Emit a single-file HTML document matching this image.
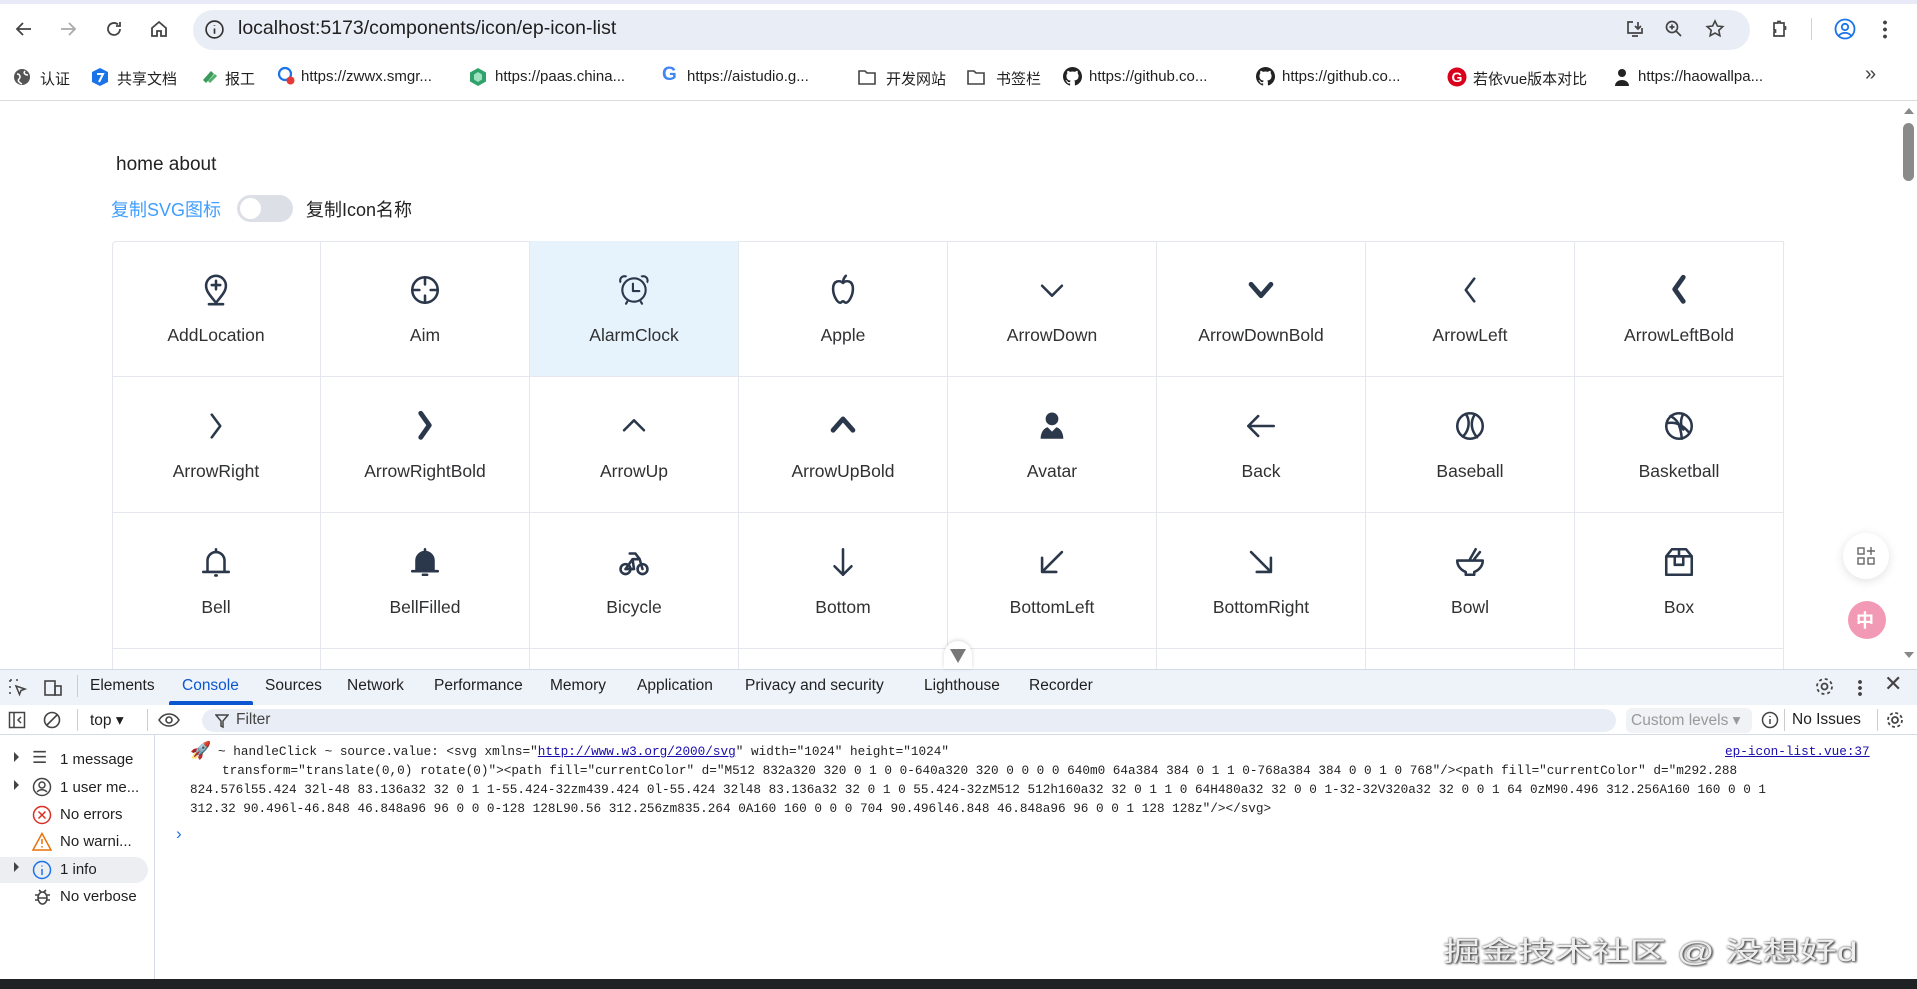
<!DOCTYPE html>
<html><head><meta charset="utf-8"><style>
*{box-sizing:border-box;margin:0;padding:0}
body{width:1917px;height:989px;overflow:hidden;background:#fff;font-family:"Liberation Sans","Noto Sans CJK SC",sans-serif;position:relative;color:#1f1f1f}
.a{position:absolute;white-space:nowrap}
.ic{position:absolute}
.bm{position:absolute;top:68px;font-size:15px;color:#1f1f1f}
.cell{position:absolute;width:209px;height:136px;border-right:1px solid #e4e7ed;border-bottom:1px solid #e4e7ed;text-align:center}
.cell svg{position:absolute;left:87px;top:32px;width:34px;height:34px;fill:none;stroke:#2b374a;stroke-width:1.8;stroke-linecap:round;stroke-linejoin:round}
.cell span{position:absolute;left:0;right:0;top:84px;font-size:17.5px;color:#303133}
.tab{position:absolute;top:677px;font-size:15.5px;color:#1f1f1f}
.sb{position:absolute;left:60px;font-size:15px;color:#1f1f1f}
.mono{position:absolute;font-family:"Liberation Mono","Noto Sans CJK SC",monospace;font-size:12.7px;color:#1f1f1f;white-space:pre}
</style></head><body>
<div class="a" style="left:0;top:0;width:1917px;height:101px;background:#fff;border-bottom:1px solid #dadce0"></div>
<div class="a" style="left:0;top:0;width:1917px;height:4px;background:#e8eaf7"></div>
<svg class="ic" style="left:14px;top:19px" width="20" height="20" viewBox="0 0 20 20" fill="none" stroke="#444" stroke-width="1.8"><path d="M17 10H3M9 4l-6 6 6 6"/></svg>
<svg class="ic" style="left:58px;top:19px" width="20" height="20" viewBox="0 0 20 20" fill="none" stroke="#aaa" stroke-width="1.8"><path d="M3 10h14M11 4l6 6-6 6"/></svg>
<svg class="ic" style="left:104px;top:19px" width="20" height="20" viewBox="0 0 20 20" fill="none" stroke="#444" stroke-width="1.8"><path d="M16 10a6 6 0 1 1-2-4.5M16 3v4h-4"/></svg>
<svg class="ic" style="left:149px;top:19px" width="20" height="20" viewBox="0 0 20 20" fill="none" stroke="#444" stroke-width="1.8"><path d="M3 9l7-6 7 6v8h-5v-5H8v5H3z"/></svg>
<div class="a" style="left:193px;top:10px;width:1557px;height:40px;border-radius:20px;background:#e9eef6"></div>
<svg class="ic" style="left:204px;top:19px" width="21" height="21" viewBox="0 0 20 20" fill="none" stroke="#333" stroke-width="1.6"><circle cx="10" cy="10" r="8"/><path d="M10 9v5M10 6v.5"/></svg>
<div class="a" style="left:238px;top:17px;font-size:19.5px;color:#1f1f1f">localhost:5173/components/icon/ep-icon-list</div>
<svg class="ic" style="left:1625px;top:19px" width="20" height="20" viewBox="0 0 20 20" fill="none" stroke="#444" stroke-width="1.7"><path d="M8 3H3v11h14V9M7 17h6M13 3v7M10 7l3 3 3-3"/></svg>
<svg class="ic" style="left:1664px;top:19px" width="20" height="20" viewBox="0 0 20 20" fill="none" stroke="#444" stroke-width="1.7"><circle cx="8" cy="8" r="5.5"/><path d="M12 12l5 5M8 5.5v5M5.5 8h5"/></svg>
<svg class="ic" style="left:1705px;top:19px" width="20" height="20" viewBox="0 0 20 20" fill="none" stroke="#444" stroke-width="1.6"><path d="M10 2l2.4 5 5.4.6-4 3.7 1.1 5.4L10 14l-4.9 2.7 1.1-5.4-4-3.7 5.4-.6z"/></svg>
<svg class="ic" style="left:1769px;top:19px" width="20" height="20" viewBox="0 0 20 20" fill="none" stroke="#444" stroke-width="1.7"><path d="M5 4h4V2.5h2V4h4v4h1.5v2H15v7H5v-4h1.5v-2H5z"/></svg>
<div class="a" style="left:1811px;top:18px;width:1px;height:22px;background:#c8d2e6"></div>
<svg class="ic" style="left:1833px;top:17px" width="24" height="24" viewBox="0 0 24 24" fill="none" stroke="#1a73e8" stroke-width="1.8"><circle cx="12" cy="12" r="9.5"/><circle cx="12" cy="10" r="3.2"/><path d="M6 18.5c3-3.5 9-3.5 12 0"/></svg>
<div class="a" style="left:1883px;top:19px;width:4px;height:20px;background:radial-gradient(circle,#444 1.8px,transparent 2px) 0 0/4px 7px"></div>
<svg class="ic" style="left:13px;top:68px" width="18" height="18"><circle cx="9" cy="9" r="8" fill="#555"/><path d="M4 6c3 0 4 3 2 5s1 4 3 5M12 3c-2 2 0 4 3 4" stroke="#fff" stroke-width="1.5" fill="none"/></svg>
<div class="bm" style="left:40px">认证</div>
<svg class="ic" style="left:91px;top:67px" width="18" height="20"><path d="M9 1l8 4v10l-8 4-8-4V5z" fill="#1a73e8"/><path d="M6 7h6l-4 8" stroke="#fff" stroke-width="2" fill="none"/></svg>
<div class="bm" style="left:117px">共享文档</div>
<svg class="ic" style="left:200px;top:68px" width="18" height="18"><path d="M3 12l8-9 3 3-8 9z" fill="#3a9a5b"/><path d="M9 14l7-7" stroke="#4fb06d" stroke-width="3"/></svg>
<div class="bm" style="left:225px">报工</div>
<svg class="ic" style="left:276px;top:66px" width="20" height="20"><circle cx="9" cy="8" r="6" fill="none" stroke="#1a73e8" stroke-width="2.2"/><circle cx="14.5" cy="14.5" r="4" fill="#e53935"/></svg>
<div class="bm" style="left:301px">https://zwwx.smgr...</div>
<svg class="ic" style="left:469px;top:67px" width="18" height="20"><path d="M9 1l8 4.5v9L9 19l-8-4.5v-9z" fill="#2fa36b"/><path d="M9 5l4 2.5v5L9 15l-4-2.5v-5z" fill="#9ee2bf"/></svg>
<div class="bm" style="left:495px">https://paas.china...</div>
<div class="a" style="left:662px;top:64px;font-size:19px;font-weight:bold;color:#4285f4">G</div>
<div class="bm" style="left:687px">https://aistudio.g...</div>
<svg class="ic" style="left:857px;top:68px" width="20" height="18" fill="none" stroke="#444" stroke-width="1.6"><path d="M2 3h6l2 2h8v11H2z"/></svg>
<div class="bm" style="left:886px">开发网站</div>
<svg class="ic" style="left:966px;top:68px" width="20" height="18" fill="none" stroke="#444" stroke-width="1.6"><path d="M2 3h6l2 2h8v11H2z"/></svg>
<div class="bm" style="left:996px">书签栏</div>
<svg class="ic" style="left:1063px;top:67px" width="19" height="19" viewBox="0 0 16 16"><path fill="#222" d="M8 0C3.6 0 0 3.6 0 8c0 3.5 2.3 6.5 5.5 7.6.4.1.5-.2.5-.4v-1.4c-2.2.5-2.7-1-2.7-1-.4-.9-.9-1.2-.9-1.2-.7-.5.1-.5.1-.5.8.1 1.2.8 1.2.8.7 1.2 1.9.9 2.3.7.1-.5.3-.9.5-1.100-1.8-.2-3.6-.9-3.6-4 0-.9.3-1.6.8-2.1-.1-.2-.4-1 .1-2.1 0 0 .7-.2 2.2.8.6-.2 1.3-.3 2-.3s1.4.1 2 .3c1.5-1 2.2-.8 2.2-.8.4 1.1.2 1.9.1 2.1.5.6.8 1.3.8 2.1 0 3.1-1.9 3.7-3.7 3.9.3.3.6.8.6 1.5v2.2c0 .2.1.5.6.4C13.7 14.5 16 11.5 16 8c0-4.4-3.6-8-8-8z"/></svg>
<div class="bm" style="left:1089px">https://github.co...</div>
<svg class="ic" style="left:1256px;top:67px" width="19" height="19" viewBox="0 0 16 16"><path fill="#222" d="M8 0C3.6 0 0 3.6 0 8c0 3.5 2.3 6.5 5.5 7.6.4.1.5-.2.5-.4v-1.4c-2.2.5-2.7-1-2.7-1-.4-.9-.9-1.2-.9-1.2-.7-.5.1-.5.1-.5.8.1 1.2.8 1.2.8.7 1.2 1.9.9 2.3.7.1-.5.3-.9.5-1.1-1.8-.2-3.6-.9-3.6-4 0-.9.3-1.6.8-2.1-.1-.2-.4-1 .1-2.1 0 0 .7-.2 2.2.8.6-.2 1.3-.3 2-.3s1.4.1 2 .3c1.5-1 2.2-.8 2.2-.8.4 1.1.2 1.9.1 2.1.5.6.8 1.3.8 2.1 0 3.1-1.9 3.7-3.7 3.9.3.3.6.8.6 1.5v2.2c0 .2.1.5.6.4C13.7 14.5 16 11.5 16 8c0-4.4-3.6-8-8-8z"/></svg>
<div class="bm" style="left:1282px">https://github.co...</div>
<svg class="ic" style="left:1447px;top:67px" width="20" height="20"><circle cx="10" cy="10" r="9.5" fill="#d9001b"/><text x="10" y="15" font-size="14" font-weight="bold" fill="#fff" text-anchor="middle" font-family="Liberation Sans">G</text></svg>
<div class="bm" style="left:1473px">若依vue版本对比</div>
<svg class="ic" style="left:1613px;top:67px" width="18" height="20"><circle cx="9" cy="6" r="4" fill="#222"/><path d="M2 19c0-8 14-8 14 0z" fill="#222"/></svg>
<div class="bm" style="left:1638px">https://haowallpa...</div>
<div class="a" style="left:1865px;top:63px;font-size:20px;color:#444">»</div>
<div class="a" style="left:116px;top:154px;font-size:19px;color:#222">home about</div>
<div class="a" style="left:111px;top:196px;font-size:18px;color:#409eff">复制SVG图标</div>
<div class="a" style="left:237px;top:195px;width:56px;height:27px;border-radius:14px;background:#dcdfe6"></div>
<div class="a" style="left:240px;top:198px;width:21px;height:21px;border-radius:50%;background:#fff"></div>
<div class="a" style="left:306px;top:196px;font-size:18px;color:#222">复制Icon名称</div>
<div class="a" style="left:112px;top:241px;width:1673px;height:430px;border-left:1px solid #e4e7ed;border-top:1px solid #e4e7ed;border-top-left-radius:4px;border-top-right-radius:4px"></div>

<div class="a" style="left:1900px;top:101px;width:17px;height:568px;background:#fff"></div>
<div class="a" style="left:1904px;top:108px;width:0;height:0;border-left:5px solid transparent;border-right:5px solid transparent;border-bottom:6px solid #888"></div>
<div class="a" style="left:1903px;top:123px;width:11px;height:58px;border-radius:6px;background:#8a8a8a"></div>
<div class="a" style="left:1904px;top:652px;width:0;height:0;border-left:5px solid transparent;border-right:5px solid transparent;border-top:6px solid #888"></div>
<div class="a" style="left:1843px;top:533px;width:46px;height:46px;border-radius:50%;background:#fff;box-shadow:0 2px 10px rgba(0,0,0,.12)"></div>
<svg class="ic" style="left:1856px;top:546px" width="20" height="20" fill="none" stroke="#666" stroke-width="1.4"><rect x="2" y="2" width="6" height="6"/><rect x="2" y="12" width="6" height="6"/><rect x="12" y="12" width="6" height="6"/><path d="M15 1v8M11 5h8"/></svg>
<div class="a" style="left:1848px;top:601px;width:38px;height:38px;border-radius:50%;background:#f29ab5"></div>
<div class="a" style="left:1856px;top:607px;font-size:18px;font-weight:bold;color:#fff">中</div>

<div class="a" style="left:112px;top:241px">
<div class="cell" style="left:0;top:0"><svg viewBox="0 0 24 24"><path d="M12 21c-4-5-7-8-7-12a7 7 0 0 1 14 0c0 4-3 7-7 12zM12 5.5v6M9 8.5h6M7 22h10"/></svg><span>AddLocation</span></div>
<div class="cell" style="left:209px;top:0"><svg viewBox="0 0 24 24"><circle cx="12" cy="12" r="9"/><path d="M12 3v5M12 16v5M3 12h5M16 12h5"/></svg><span>Aim</span></div>
<div class="cell" style="left:418px;top:0;background:#e6f3fd"><svg viewBox="0 0 1024 1024" style="fill:#2b374a;stroke:none"><path d="M512 832a320 320 0 1 0 0-640a320 320 0 0 0 0 640m0 64a384 384 0 1 1 0-768a384 384 0 0 1 0 768"/><path d="m292.288 824.576l55.424 32l-48 83.136a32 32 0 1 1-55.424-32zm439.424 0l-55.424 32l48 83.136a32 32 0 1 0 55.424-32zM512 512h160a32 32 0 1 1 0 64H480a32 32 0 0 1-32-32V320a32 32 0 0 1 64 0zM90.496 312.256A160 160 0 0 1 312.32 90.496l-46.848 46.848a96 96 0 0 0-128 128L90.56 312.256zm835.264 0A160 160 0 0 0 704 90.496l46.848 46.848a96 96 0 0 1 128 128z"/></svg><span>AlarmClock</span></div>
<div class="cell" style="left:627px;top:0"><svg viewBox="0 0 24 24"><path d="M12 7c-2-2-7-2-7 4 0 5 3 10 5 10 1 0 1-1 2-1s1 1 2 1c2 0 5-5 5-10 0-6-5-6-7-4zM12 7c0-2 1-4 2-5"/></svg><span>Apple</span></div>
<div class="cell" style="left:836px;top:0"><svg viewBox="0 0 24 24"><path d="M5 9l7 7 7-7"/></svg><span>ArrowDown</span></div>
<div class="cell" style="left:1045px;top:0"><svg viewBox="0 0 24 24" style="stroke-width:3.4"><path d="M5 8l7 8 7-8"/></svg><span>ArrowDownBold</span></div>
<div class="cell" style="left:1254px;top:0"><svg viewBox="0 0 24 24"><path d="M15 4l-6 8 6 8"/></svg><span>ArrowLeft</span></div>
<div class="cell" style="left:1463px;top:0"><svg viewBox="0 0 24 24" style="stroke-width:3.4"><path d="M15 3l-6 8.5 6 8.5"/></svg><span>ArrowLeftBold</span></div>
<div class="cell" style="left:0;top:136px"><svg viewBox="0 0 24 24"><path d="M9 4l6 8-6 8"/></svg><span>ArrowRight</span></div>
<div class="cell" style="left:209px;top:136px"><svg viewBox="0 0 24 24" style="stroke-width:3.4"><path d="M9 3l6 8.5-6 8.5"/></svg><span>ArrowRightBold</span></div>
<div class="cell" style="left:418px;top:136px"><svg viewBox="0 0 24 24"><path d="M5 15l7-7 7 7"/></svg><span>ArrowUp</span></div>
<div class="cell" style="left:627px;top:136px"><svg viewBox="0 0 24 24" style="stroke-width:3.4"><path d="M5 15l7-8 7 8"/></svg><span>ArrowUpBold</span></div>
<div class="cell" style="left:836px;top:136px"><svg viewBox="0 0 24 24" style="fill:#2b374a;stroke:none"><circle cx="12" cy="7" r="4.5"/><path d="M4 21c0-5 3-8 5-8l3 3 3-3c2 0 5 3 5 8z"/></svg><span>Avatar</span></div>
<div class="cell" style="left:1045px;top:136px"><svg viewBox="0 0 24 24"><path d="M21 12H4M10 5l-7 7 7 7"/></svg><span>Back</span></div>
<div class="cell" style="left:1254px;top:136px"><svg viewBox="0 0 24 24"><circle cx="12" cy="12" r="9"/><path d="M9 3.5c3 4 3 11 -2 16M15 4.5c-3 5-2 11 2 15.5"/></svg><span>Baseball</span></div>
<div class="cell" style="left:1463px;top:136px"><svg viewBox="0 0 24 24"><circle cx="12" cy="12" r="9"/><path d="M6 5c4 2 7 5 8 16M3.5 10c5-1 10 0 15 6M15 3.5c-2 4-2 8 0 11"/></svg><span>Basketball</span></div>
<div class="cell" style="left:0;top:272px"><svg viewBox="0 0 24 24"><path d="M6 19V11a6 6 0 0 1 12 0v8M3 19h18M12 3v2M11.5 21.5h1"/></svg><span>Bell</span></div>
<div class="cell" style="left:209px;top:272px"><svg viewBox="0 0 24 24" style="fill:#2b374a"><path d="M6 18V11a6 6 0 0 1 12 0v7zM3 18.5h18M12 3v2M10.5 21h3"/></svg><span>BellFilled</span></div>
<div class="cell" style="left:418px;top:272px"><svg viewBox="0 0 24 24"><circle cx="6" cy="17" r="3.5"/><circle cx="18" cy="17" r="3.5"/><path d="M6 17l5-7h5l2 7M9 6h4l3 4M11 10l1 7h-6"/></svg><span>Bicycle</span></div>
<div class="cell" style="left:627px;top:272px"><svg viewBox="0 0 24 24"><path d="M12 3v18M6 15l6 6 6-6"/></svg><span>Bottom</span></div>
<div class="cell" style="left:836px;top:272px"><svg viewBox="0 0 24 24"><path d="M19 5L5 19M5 9v10h10"/></svg><span>BottomLeft</span></div>
<div class="cell" style="left:1045px;top:272px"><svg viewBox="0 0 24 24"><path d="M5 5l14 14M19 9v10H9"/></svg><span>BottomRight</span></div>
<div class="cell" style="left:1254px;top:272px"><svg viewBox="0 0 24 24"><path d="M3 11h18c0 4-3 7-6 8v2H9v-2c-3-1-6-4-6-8zM12 10l4-7M15 10l4-5"/></svg><span>Bowl</span></div>
<div class="cell" style="left:1463px;top:272px"><svg viewBox="0 0 24 24"><path d="M7 3h10l4 5v13H3V8zM3 8h18M12 3v5M9 8v6h6V8"/></svg><span>Box</span></div>
<div class="cell" style="left:0;top:408px;height:22px;border-bottom:none"></div>
<div class="cell" style="left:209px;top:408px;height:22px;border-bottom:none"></div>
<div class="cell" style="left:418px;top:408px;height:22px;border-bottom:none"></div>
<div class="cell" style="left:627px;top:408px;height:22px;border-bottom:none"></div>
<div class="cell" style="left:836px;top:408px;height:22px;border-bottom:none"></div>
<div class="cell" style="left:1045px;top:408px;height:22px;border-bottom:none"></div>
<div class="cell" style="left:1254px;top:408px;height:22px;border-bottom:none"></div>
<div class="cell" style="left:1463px;top:408px;height:22px;border-bottom:none"></div>
</div>

<div class="a" style="left:0;top:669px;width:1917px;height:320px;background:#fff"></div>
<div class="a" style="left:0;top:669px;width:1917px;height:36px;background:#eef2f9;border-top:1px solid #d5dbe6"></div>
<svg class="ic" style="left:8px;top:678px" width="20" height="20" fill="none" stroke="#444" stroke-width="1.5"><path d="M2 2h3M8 2h3M2 2v3M2 8v3M2 14v3" stroke-dasharray="2 1.5"/><path d="M8 8l9 3-4 1.5-1.5 4z"/></svg>
<svg class="ic" style="left:43px;top:678px" width="20" height="20" fill="none" stroke="#444" stroke-width="1.6"><rect x="2" y="3" width="10" height="14"/><rect x="12" y="8" width="6" height="9"/></svg>
<div class="a" style="left:77px;top:675px;width:1px;height:22px;background:#ccc"></div>
<div class="tab" style="left:90px">Elements</div>
<div class="tab" style="left:182px;color:#0b57d0">Console</div>
<div class="a" style="left:169px;top:701px;width:84px;height:4px;border-radius:2px 2px 0 0;background:#0b57d0"></div>
<div class="tab" style="left:265px">Sources</div>
<div class="tab" style="left:347px">Network</div>
<div class="tab" style="left:434px">Performance</div>
<div class="tab" style="left:550px">Memory</div>
<div class="tab" style="left:637px">Application</div>
<div class="tab" style="left:745px">Privacy and security</div>
<div class="tab" style="left:924px">Lighthouse</div>
<div class="tab" style="left:1029px">Recorder</div>
<svg class="ic" style="left:1814px;top:676px" width="21" height="21" fill="none" stroke="#444" stroke-width="1.8"><circle cx="10.5" cy="10.5" r="3"/><circle cx="10.5" cy="10.5" r="7.5" stroke-dasharray="3 2.9"/></svg>
<div class="a" style="left:1858px;top:679px;width:4px;height:18px;background:radial-gradient(circle,#444 1.8px,transparent 2px) 0 0/4px 6px"></div>
<div class="a" style="left:1884px;top:671px;font-size:22px;color:#444">✕</div>
<div class="a" style="left:0;top:705px;width:1917px;height:30px;border-bottom:1px solid #d5dbe6"></div>
<svg class="ic" style="left:8px;top:711px" width="18" height="18" fill="none" stroke="#444" stroke-width="1.5"><rect x="1.5" y="1.5" width="15" height="15"/><path d="M6 2v14M13 6l-3 3 3 3"/></svg>
<svg class="ic" style="left:43px;top:711px" width="18" height="18" fill="none" stroke="#444" stroke-width="1.6"><circle cx="9" cy="9" r="7.5"/><path d="M4 14L14 4"/></svg>
<div class="a" style="left:77px;top:709px;width:1px;height:22px;background:#ccc"></div>
<div class="a" style="left:90px;top:711px;font-size:15.5px">top ▾</div>
<div class="a" style="left:147px;top:709px;width:1px;height:22px;background:#ccc"></div>
<svg class="ic" style="left:158px;top:711px" width="22" height="18" fill="none" stroke="#444" stroke-width="1.6"><path d="M1 9c5-8 15-8 20 0c-5 8-15 8-20 0z"/><circle cx="11" cy="9" r="3"/></svg>
<div class="a" style="left:202px;top:709px;width:1414px;height:23px;border-radius:12px;background:#e9eef6"></div>
<svg class="ic" style="left:215px;top:713px" width="14" height="16" fill="none" stroke="#444" stroke-width="1.5"><path d="M1 2h12L8 8v6l-2-1V8z"/></svg>
<div class="a" style="left:236px;top:711px;font-size:15.5px;color:#444">Filter</div>
<div class="a" style="left:1626px;top:708px;width:126px;height:25px;border-radius:6px;background:#f0f2f5"></div>
<div class="a" style="left:1631px;top:711px;font-size:15.5px;color:#999">Custom levels ▾</div>
<svg class="ic" style="left:1761px;top:711px" width="18" height="18" fill="none" stroke="#444" stroke-width="1.5"><circle cx="9" cy="9" r="7.5"/><path d="M9 8v5M9 5v1"/></svg>
<div class="a" style="left:1784px;top:709px;width:1px;height:22px;background:#ccc"></div>
<div class="a" style="left:1792px;top:711px;font-size:15.5px">No Issues</div>
<div class="a" style="left:1877px;top:709px;width:1px;height:22px;background:#ccc"></div>
<svg class="ic" style="left:1885px;top:710px" width="20" height="20" fill="none" stroke="#444" stroke-width="1.8"><circle cx="10" cy="10" r="3"/><circle cx="10" cy="10" r="7" stroke-dasharray="3 2.5"/></svg>
<div class="a" style="left:154px;top:735px;width:1px;height:245px;background:#d5dbe6"></div>
<div class="a" style="left:0;top:857px;width:148px;height:26px;border-radius:0 13px 13px 0;background:#eceef1"></div>
<div class="a" style="left:14px;top:752px;width:0;height:0;border-top:5px solid transparent;border-bottom:5px solid transparent;border-left:5px solid #444"></div>
<div class="a" style="left:14px;top:780px;width:0;height:0;border-top:5px solid transparent;border-bottom:5px solid transparent;border-left:5px solid #444"></div>
<div class="a" style="left:14px;top:862px;width:0;height:0;border-top:5px solid transparent;border-bottom:5px solid transparent;border-left:5px solid #444"></div>
<div class="a" style="left:32px;top:748px;font-size:17px;color:#444">☰</div>
<svg class="ic" style="left:32px;top:777px" width="20" height="20" fill="none" stroke="#444" stroke-width="1.5"><circle cx="10" cy="10" r="8.5"/><circle cx="10" cy="8" r="3"/><path d="M5 15c3-3 7-3 10 0"/></svg>
<svg class="ic" style="left:32px;top:805px" width="20" height="20" fill="none" stroke="#d93025" stroke-width="1.5"><circle cx="10" cy="10" r="8.5"/><path d="M6.5 6.5l7 7M13.5 6.5l-7 7"/></svg>
<svg class="ic" style="left:32px;top:832px" width="20" height="19" fill="none" stroke="#e8710a" stroke-width="1.5"><path d="M10 1.5L19 18H1z"/><path d="M10 7v5M10 14v1.5"/></svg>
<svg class="ic" style="left:32px;top:860px" width="20" height="20" fill="none" stroke="#1a73e8" stroke-width="1.5"><circle cx="10" cy="10" r="8.5"/><path d="M10 9v6M10 5.5v1"/></svg>
<svg class="ic" style="left:34px;top:887px" width="17" height="19" fill="none" stroke="#444" stroke-width="1.6"><ellipse cx="8.5" cy="11" rx="4.5" ry="6"/><path d="M1 8h3M13 8h3M1 13h3M13 13h3M5 3l2 2M12 3l-2 2M4 11h9"/></svg>
<div class="sb" style="top:751px">1 message</div>
<div class="sb" style="top:779px">1 user me...</div>
<div class="sb" style="top:806px">No errors</div>
<div class="sb" style="top:833px">No warni...</div>
<div class="sb" style="top:861px">1 info</div>
<div class="sb" style="top:888px">No verbose</div>
<div class="a" style="left:190px;top:741px;font-size:17px">🚀</div>
<div class="mono" style="left:218px;top:744px">~ handleClick ~ source.value: &lt;svg xmlns="<span style="color:#1a0dab;text-decoration:underline">http://www.w3.org/2000/svg</span>" width="1024" height="1024"</div>
<div class="mono" style="left:222px;top:763px">transform="translate(0,0) rotate(0)"&gt;&lt;path fill="currentColor" d="M512 832a320 320 0 1 0 0-640a320 320 0 0 0 0 640m0 64a384 384 0 1 1 0-768a384 384 0 0 1 0 768"/&gt;&lt;path fill="currentColor" d="m292.288</div>
<div class="mono" style="left:190px;top:782px">824.576l55.424 32l-48 83.136a32 32 0 1 1-55.424-32zm439.424 0l-55.424 32l48 83.136a32 32 0 1 0 55.424-32zM512 512h160a32 32 0 1 1 0 64H480a32 32 0 0 1-32-32V320a32 32 0 0 1 64 0zM90.496 312.256A160 160 0 0 1</div>
<div class="mono" style="left:190px;top:801px">312.32 90.496l-46.848 46.848a96 96 0 0 0-128 128L90.56 312.256zm835.264 0A160 160 0 0 0 704 90.496l46.848 46.848a96 96 0 0 1 128 128z"/&gt;&lt;/svg&gt;</div>
<div class="mono" style="left:1725px;top:744px;color:#1a0dab;text-decoration:underline">ep-icon-list.vue:37</div>
<div class="a" style="left:176px;top:824px;font-size:17px;color:#1a73e8">›</div>
<div class="a" style="left:1443px;top:930px;font-size:27px;color:#eee;text-shadow:0 0 2px #555,1px 1px 2px #333;transform:scaleX(1.38);transform-origin:0 0">掘金技术社区 @ 没想好d</div>
<div class="a" style="left:0;top:979px;width:1917px;height:10px;background:#1f2124"></div>
<div class="a" style="left:0;top:669px;width:1917px;height:1px;background:#d5dbe6"></div>
<div class="a" style="left:944px;top:641px;width:28px;height:28px;border-radius:14px 14px 0 0;background:#fff;box-shadow:0 -1px 4px rgba(0,0,0,.15)"></div>
<svg class="ic" style="left:949px;top:648px" width="18" height="16"><path d="M1 1h16l-8 14z" fill="#777"/></svg>
</body></html>
